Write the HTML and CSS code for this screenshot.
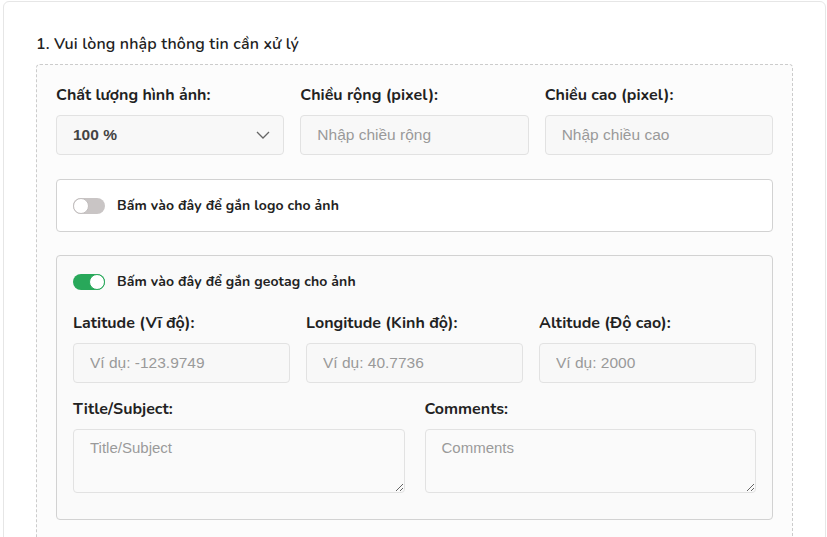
FILE: index.html
```html
<!DOCTYPE html>
<html lang="vi">
<head>
	<meta charset="UTF-8">
	<title>Xử lý ảnh</title>
	<link rel="stylesheet" href="styles.css">
</head>
<body>

	<!-- Khung chính -->
	<div class="card">
		<h2 class="tieude">1. Vui lòng nhập thông tin cần xử lý</h2>

		<div class="khung">
			<!-- Kích thước ảnh -->
			<div class="hang ba-cot">
				<div class="nhom">
					<label class="nhan">Chất lượng hình ảnh:</label>
					<div class="o-nhap chon">
						<span>100 %</span>
						<svg width="14" height="8" viewBox="0 0 14 8"><path d="M1 1l6 6 6-6" fill="none" stroke="#666" stroke-width="1.3"/></svg>
					</div>
				</div>
				<div class="nhom">
					<label class="nhan">Chiều rộng (pixel):</label>
					<input class="o-nhap" type="text" placeholder="Nhập chiều rộng">
				</div>
				<div class="nhom">
					<label class="nhan">Chiều cao (pixel):</label>
					<input class="o-nhap" type="text" placeholder="Nhập chiều cao">
				</div>
			</div>

			<!-- Logo -->
			<div class="hop">
				<div class="cong-tac">
					<span class="nut"></span>
					<span class="chu">Bấm vào đây để gắn logo cho ảnh</span>
				</div>
			</div>

			<!-- Geotag -->
			<div class="hop hop-geo">
				<div class="cong-tac">
					<span class="nut bat"></span>
					<span class="chu">Bấm vào đây để gắn geotag cho ảnh</span>
				</div>

				<div class="hang ba-cot geo">
					<div class="nhom">
						<label class="nhan">Latitude (Vĩ độ):</label>
						<input class="o-nhap" type="text" placeholder="Ví dụ: -123.9749">
					</div>
					<div class="nhom">
						<label class="nhan">Longitude (Kinh độ):</label>
						<input class="o-nhap" type="text" placeholder="Ví dụ: 40.7736">
					</div>
					<div class="nhom">
						<label class="nhan">Altitude (Độ cao):</label>
						<input class="o-nhap" type="text" placeholder="Ví dụ: 2000">
					</div>
				</div>

				<div class="hang hai-cot">
					<div class="nhom">
						<label class="nhan">Title/Subject:</label>
						<textarea class="o-nhap vung" placeholder="Title/Subject"></textarea>
					</div>
					<div class="nhom">
						<label class="nhan">Comments:</label>
						<textarea class="o-nhap vung" placeholder="Comments"></textarea>
					</div>
				</div>
			</div>
		</div>
	</div>

</body>
</html>
```

FILE: styles.css
```css
	* {
		box-sizing: border-box;
	}

	body {
		font-family: "Nunito", Lato, "Noto Sans", sans-serif;
		margin: 0;
		padding: 1px 1px 0 3px;
		background-color: #ffffff;
		color: #333333;
	}

	div.card {
		border: 1px solid #e6e6e6;
		border-radius: 6px;
		padding: 33px 32px 0 32px;
		height: 560px;
		background-color: #ffffff;
	}

	h2.tieude {
		font-size: 16px;
		font-weight: 600;
		letter-spacing: 0.15px;
		margin: 0 0 11px 0;
		line-height: 18px;
		color: #222222;
	}

	div.khung {
		border: 1px dashed #cccccc;
		border-radius: 4px;
		background-color: #fcfcfc;
		padding: 20px 19px 40px 19px;
	}

	div.hang {
		display: grid;
	}

	div.ba-cot {
		grid-template-columns: 1fr 1fr 1fr;
		column-gap: 16px;
	}

	div.hai-cot {
		grid-template-columns: 1fr 1fr;
		column-gap: 20px;
	}

	div.nhom {
		display: flex;
		flex-direction: column;
		min-width: 0;
	}

	label.nhan {
		font-size: 16px;
		font-weight: 700;
		line-height: 20px;
		margin-bottom: 10px;
		color: #222222;
	}

	.o-nhap {
		width: 100%;
		height: 40px;
		border: 1px solid #e2e2e2;
		border-radius: 4px;
		background-color: #f8f8f8;
		padding: 0 16px;
		font-family: "Liberation Sans", Arial, sans-serif;
		font-size: 15.5px;
		color: #333333;
		outline: none;
	}

	.o-nhap::placeholder {
		color: #9a9a9a;
	}

	div.chon {
		display: flex;
		align-items: center;
		justify-content: space-between;
		padding: 0 13px 0 16px;
		font-weight: 700;
		color: #444444;
	}

	textarea.vung {
		height: 64px;
		padding: 9px 16px;
		resize: vertical;
		background-color: #fafafa;
		font-size: 15px;
	}

	div.hop {
		margin-top: 24px;
		border: 1px solid #d2d2d2;
		border-radius: 4px;
		background-color: #ffffff;
		padding: 16px 16px;
	}

	div.hop-geo {
		margin-top: 23px;
		background-color: #fafafa;
		padding: 16px 16px 26px 16px;
	}

	div.cong-tac {
		display: flex;
		align-items: center;
		height: 19px;
	}

	span.nut {
		position: relative;
		width: 32px;
		height: 16px;
		border-radius: 8px;
		background-color: #c9c5c5;
		margin-right: 12px;
	}

	/* nút tròn của công tắc */
	span.nut::after {
		content: "";
		position: absolute;
		left: 0;
		top: 0;
		width: 16px;
		height: 16px;
		border-radius: 50%;
		background-color: #ffffff;
		border: 1px solid #c2bebe;
		box-sizing: border-box;
	}

	span.nut.bat {
		background-color: #28a85a;
	}

	span.nut.bat::after {
		left: 16px;
		border-color: #28a85a;
	}

	span.chu {
		font-size: 14px;
		font-weight: 700;
		letter-spacing: 0.1px;
		color: #222222;
	}

	div.geo {
		margin-top: 22px;
		margin-bottom: 16px;
	}
```
